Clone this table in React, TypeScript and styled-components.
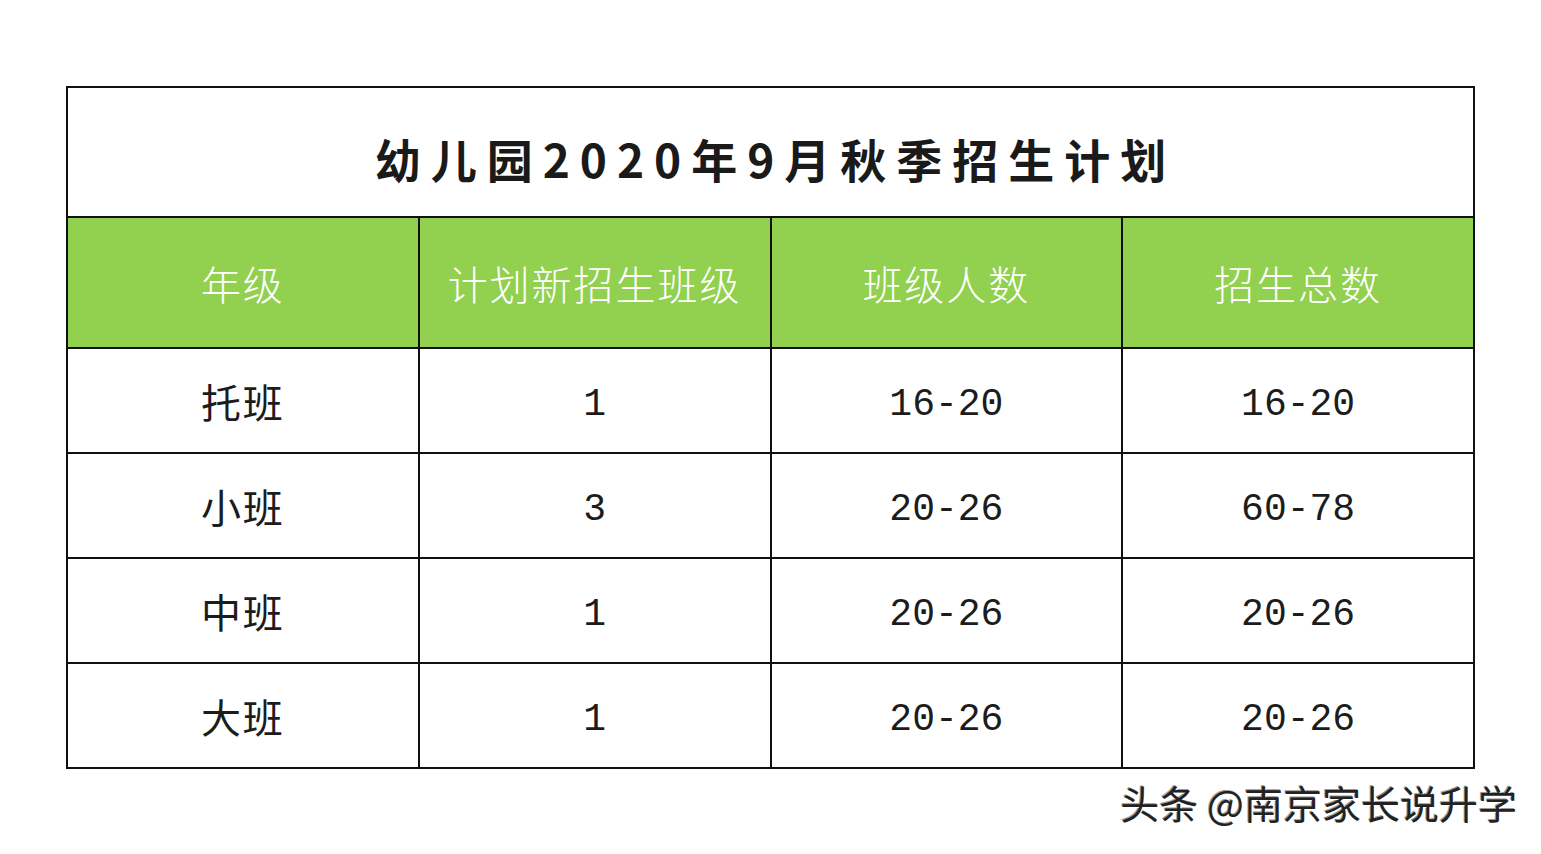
import * as React from 'react'
import styled, { createGlobalStyle } from 'styled-components'

const Global = createGlobalStyle`
  html, body {
    margin: 0;
    padding: 0;
    background: #fff;
  }
`

const Page = styled.div`
  width: 1541px;
  height: 854px;
  padding: 86px 0 0 66px;
  box-sizing: border-box;
  font-family: "Liberation Mono", "Noto Sans CJK SC", monospace;
`

const Table = styled.table`
  width: 1409px;
  table-layout: fixed;
  border-collapse: collapse;
  border: 2px solid #111;
`

const TitleCell = styled.td`
  height: 116px;
  padding: 12px 0 0 0;
  text-align: center;
  font-family: "Noto Sans CJK SC", "Liberation Serif", serif;
  font-weight: 700;
  font-size: 46px;
  letter-spacing: 10px;
  text-indent: 10px;
  color: #1a1a1a;
  border: 2px solid #111;
`

const Cell = styled.td<{ $head?: boolean; $num?: boolean }>`
  height: ${p => (p.$head ? 129 : p.$num ? 95 : 103)}px;
  padding: ${p => (p.$num ? '8px 0 0 0' : '0')};
  text-align: center;
  vertical-align: middle;
  border: 2px solid #111;
  background: ${p => (p.$head ? '#92d050' : '#fff')};
  color: ${p => (p.$head ? '#fff' : '#1c1c1c')};
  font-family: ${p => (p.$num ? '"Liberation Mono", monospace' : '"Noto Sans CJK SC", sans-serif')};
  font-size: ${p => (p.$num ? 38 : 40)}px;
  font-weight: ${p => (p.$head ? 300 : 400)};
  letter-spacing: ${p => (p.$num ? 0 : 2)}px;
`

const Footer = styled.div`
  width: 1451px;
  margin-top: 10px;
  text-align: right;
  font-family: "Noto Sans CJK SC", sans-serif;
  font-size: 39px;
  line-height: 1.2;
  color: #222;
  text-shadow: 1px 1px 0 #fff, -1px -1px 0 #999;
`

const headers = ['年级', '计划新招生班级', '班级人数', '招生总数']
const rows = [
  ['托班', '1', '16-20', '16-20'],
  ['小班', '3', '20-26', '60-78'],
  ['中班', '1', '20-26', '20-26'],
  ['大班', '1', '20-26', '20-26'],
]

const App = () => (
  <Page>
    <Global />
    <Table>
      <tbody>
        <tr>
          <TitleCell colSpan={4}>幼儿园2020年9月秋季招生计划</TitleCell>
        </tr>
        <tr>
          {headers.map(h => (
            <Cell key={h} $head>{h}</Cell>
          ))}
        </tr>
        {rows.map(r => (
          <tr key={r[0]}>
            {r.map((c, i) => (
              <Cell key={i} $num={i > 0}>{c}</Cell>
            ))}
          </tr>
        ))}
      </tbody>
    </Table>
    <Footer>头条 @南京家长说升学</Footer>
  </Page>
)

export default App
